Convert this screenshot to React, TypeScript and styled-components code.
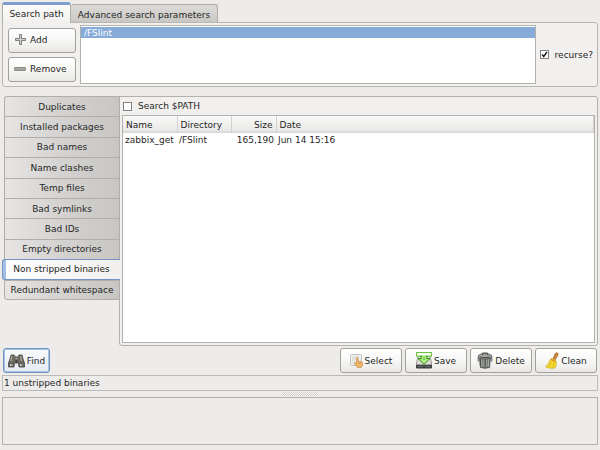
import React, { useState } from "react";
import styled, { createGlobalStyle, css } from "styled-components";

const GlobalStyle = createGlobalStyle`
  *, *::before, *::after { box-sizing: border-box; }
  body {
    margin: 0;
    background: #edeceb;
    color: #262626;
    font: 9px/14px "DejaVu Sans", Verdana, sans-serif;
  }
  button, input, textarea { font: inherit; color: inherit; margin: 0; }
  svg { display: block; flex: none; }
`;

const Window = styled.div`
  display: flex;
  flex-direction: column;
  min-height: 100vh;
  padding: 2px 2px 5px;
`;

const PathTabs = styled.div`
  display: flex;
  align-items: flex-end;
  height: 20px;
`;

const PathTab = styled.button<{ $active: boolean }>`
  position: relative;
  padding: 0 5px;
  border: 1px solid #b0aeab;
  border-bottom: 0;
  border-radius: 3px 3px 0 0;
  white-space: nowrap;
  ${({ $active }) =>
    $active
      ? css`
          width: 69px;
          height: 21px;
          margin-bottom: -1px;
          border-top: 3px solid #7d9fcd;
          background: linear-gradient(#fcfcfc, #f1f0ee);
          z-index: 1;
        `
      : css`
          width: 147px;
          height: 18px;
          border-left: 0;
          padding-top: 2px;
          background: linear-gradient(#dcdbd9, #c9c8c5);
        `}
`;

const PathPanel = styled.section`
  display: flex;
  gap: 4px;
  height: 65px;
  padding: 2px 4px 2px 5px;
  border: 1px solid #b9b7b4;
  border-radius: 0 3px 3px 3px;
  background: #f1f0ee;
`;

const PathActions = styled.div`
  display: flex;
  flex-direction: column;
  justify-content: center;
  gap: 4px;
  width: 68px;
`;

const Button = styled.button<{ $primary?: boolean; $align?: string }>`
  display: flex;
  align-items: center;
  justify-content: ${({ $align }) => $align ?? "center"};
  gap: 2px;
  height: 25px;
  padding: 0 5px;
  border: 1px solid ${({ $primary }) => ($primary ? "#6f93c2" : "#a3a19e")};
  border-radius: 3px;
  background: linear-gradient(#ffffff, #f7f7f6 50%, #e9e8e6);
  white-space: nowrap;
  ${({ $primary }) =>
    $primary &&
    css`
      background: linear-gradient(#f9fbfd, #e3eaf3);
      box-shadow: inset 0 0 0 1px #a9c1e0;
    `}
`;

const PathList = styled.ul`
  flex: 1;
  margin: 0;
  padding: 1px 0;
  border: 1px solid #b3b1ae;
  background: #fff;
  list-style: none;
`;

const PathItem = styled.li`
  height: 11px;
  padding: 0 3px;
  background: #86abd9;
  color: #fff;
  line-height: 12px;
`;

const CheckLabel = styled.label`
  display: flex;
  align-items: center;
  gap: 6px;
  white-space: nowrap;
`;

const CheckBox = styled.input`
  appearance: none;
  width: 9px;
  height: 9px;
  border: 1px solid #858381;
  background: #fff;
  &:checked {
    background: #fff
      url("data:image/svg+xml,%3Csvg xmlns='http://www.w3.org/2000/svg' viewBox='0 0 7 7'%3E%3Cpath d='M1 3.5 2.7 5.5 6 1' fill='none' stroke='%23222' stroke-width='1.5'/%3E%3C/svg%3E");
  }
`;

const Results = styled.main`
  display: flex;
  flex: 1;
  min-height: 240px;
  margin-top: 9px;
`;

const ModeTabs = styled.nav`
  position: relative;
  z-index: 1;
  display: grid;
  grid-auto-rows: 1fr;
  align-self: flex-start;
  flex: none;
  width: 118px;
  height: 204px;
  margin-right: -1px;
  padding-left: 2px;
`;

const ModeTab = styled.button<{ $active: boolean }>`
  padding: 0;
  border: 1px solid #b0aeab;
  border-bottom-width: 0;
  background: linear-gradient(90deg, #e6e5e3, #d5d4d2 45%, #c7c6c3);
  white-space: nowrap;
  &:first-child { border-top-left-radius: 3px; }
  &:last-child {
    border-bottom-width: 1px;
    border-bottom-left-radius: 3px;
  }
  ${({ $active }) =>
    $active &&
    css`
      margin-left: -2px;
      border-color: #7295c4;
      border-right: 0;
      border-bottom-width: 1px;
      border-radius: 3px 0 0 3px;
      background: linear-gradient(90deg, #a3bfe3 3px, #fdfdfd 3px, #f1f0ee);
    `}
`;

const ResultPanel = styled.section`
  display: flex;
  flex: 1;
  flex-direction: column;
  min-width: 0;
  padding: 2px;
  border: 1px solid #b3b1ae;
  border-radius: 0 3px 3px 3px;
  background: #f1f0ee;
`;

const PathOption = styled.div`
  height: 16px;
  padding: 0 1px;
`;

const TableFrame = styled.div`
  flex: 1;
  border: 1px solid #b3b1ae;
  background: #fff;
`;

const Table = styled.table`
  width: 100%;
  border-collapse: collapse;
  table-layout: fixed;
`;

const Column = styled.col<{ $width?: number }>`
  width: ${({ $width }) => ($width ? `${$width}px` : "auto")};
`;

const HeadRow = styled.tr`
  height: 17px;
  background: linear-gradient(#fafafa, #ebeae8 80%, #d8d6d4);
`;

const HeadCell = styled.th<{ $right?: boolean }>`
  padding: 1px 3px 0;
  border-right: 1px solid #d3d1cf;
  font-weight: normal;
  text-align: ${({ $right }) => ($right ? "right" : "left")};
`;

const Cell = styled.td<{ $right?: boolean }>`
  padding: 0 2px;
  text-align: ${({ $right }) => ($right ? "right" : "left")};
  white-space: nowrap;
`;

const Toolbar = styled.div`
  display: flex;
  gap: 3px;
  padding: 2px 1px;
`;

const FindSlot = styled.div`
  display: flex;
  flex: 1;
`;

const ToolButton = styled(Button)`
  width: 62px;
`;

const FindButton = styled(Button)`
  width: 47px;
  padding: 0 3px;
`;

const Status = styled.output`
  display: block;
  height: 16px;
  padding: 0 1px;
  border: 1px solid #bcbab8;
`;

const Grip = styled.div`
  align-self: center;
  width: 36px;
  height: 4px;
  margin: 1px 0;
  background: repeating-conic-gradient(#d2d0ce 0 25%, #f5f4f3 0 50%) 0 0 / 2px 2px;
`;

const Log = styled.textarea`
  display: block;
  width: 100%;
  height: 48px;
  padding: 2px;
  border: 1px solid #b3b1ae;
  background: #edeceb;
  resize: none;
  outline: 0;
`;

const PlusIcon = () => (
  <svg width="14" height="14" viewBox="0 0 14 14">
    <path d="M5.5 1.5h2v4h4v2h-4v4h-2v-4h-4v-2h4z" fill="#d0d0ce" stroke="#7d7d7b" />
  </svg>
);

const MinusIcon = () => (
  <svg width="14" height="14" viewBox="0 0 14 14">
    <rect x=".5" y="5.5" width="11" height="3" rx=".5" fill="#a5a5a3" stroke="#8d8d8b" />
  </svg>
);

const BinocularsIcon = () => (
  <svg width="17" height="16" viewBox="0 0 17 16">
    <path d="M3 2h3l1 2h3l1-2h3l1 4 1.5 4v4H11l-.5-4h-4L6 14H.5v-4L2 6z" fill="#6a6a61" stroke="#45453f" strokeWidth=".8" />
    <path d="M4 3 3 8M12.5 3l1 5M7.5 5.5h2" stroke="#aaa99c" strokeWidth="1.3" />
    <path d="M1.5 10.5h4v3h-4zM11.5 10.5h4v3h-4z" fill="#96958a" stroke="#4b4b45" strokeWidth=".6" />
    <path d="M2.5 11v2M12.5 11v2" stroke="#d5d4c8" />
    <path d="M7.5 7.5h2v2h-2z" fill="#35352f" />
  </svg>
);

const SelectIcon = () => (
  <svg width="13" height="14" viewBox="0 0 13 14">
    <rect x=".5" y=".5" width="11" height="11" rx="1" fill="#f1f1ee" stroke="#c2c2be" />
    <path d="M2 3h7M2 5h4M2 7h3M2 9h3" stroke="#d3d3cf" />
    <path d="M6.5 9V4.5q0-.9.8-.9t.8.9V7l3.5.8q.9.3.9 1.2v2.5L11 13.5H7.5L4.5 10q-.3-1 .6-1.1z" fill="#efb56a" stroke="#c08c4e" strokeWidth=".7" />
    <path d="M8.2 8v2M10 8.3v1.8" stroke="#cf924c" strokeWidth=".6" />
  </svg>
);

const SaveIcon = () => (
  <svg width="16" height="17" viewBox="0 0 16 17">
    <path d="M2 4h12l1.5 7v5H.5v-5z" fill="#deded9" stroke="#888a85" strokeWidth=".8" />
    <path d="M.5 13h15v3H.5z" fill="#444745" stroke="#343633" strokeWidth=".7" />
    <path d="M2 14.5h5M10 14.5h4" stroke="#80827d" strokeDasharray="1 .6" />
    <rect x=".6" y=".6" width="14.8" height="3.5" fill="#fff" stroke="#61bc2b" />
    <path d="M5 4.2h6v2.3h3L8 12.3 2 6.5h3z" fill="#8bdc59" stroke="#3f971d" />
    <path d="M6.2 3h3.6v4.3H12L8 11 4.5 7.4h1.7z" fill="#b7ef8c" />
    <path d="M8 5v3" stroke="#48a51f" />
  </svg>
);

const TrashIcon = () => (
  <svg width="16" height="17" viewBox="0 0 16 17">
    <path d="M2.5 5h11l-1 10.5q-4.5 1.5-9 0z" fill="#777974" stroke="#40423f" strokeWidth=".8" />
    <path d="m4.5 7 .5 8M7 7v8M9.3 7v8M11.8 7l-.5 8" stroke="#b5b7b2" strokeWidth=".8" />
    <path d="M3.3 7v7M8.2 7v8" stroke="#3a3c39" strokeWidth=".8" />
    <path d="M1 5q0-3.3 7-3.3T15 5q-1 2-7 2T1 5z" fill="#a5a7a2" stroke="#444643" strokeWidth=".8" />
    <path d="M5.5 3V1h5v2M3 5q5 1.3 10 0" fill="none" stroke="#4a4c49" />
    <path d="M1.2 5.5v4M14.8 5.5v4" stroke="#555753" />
  </svg>
);

const BroomIcon = () => (
  <svg width="14" height="17" viewBox="0 0 14 17">
    <path d="m8 7 2.3-5.5q1-1.3 2.2-.4.9.7.4 2L10 8z" fill="#cd853c" stroke="#9d6228" strokeWidth=".7" />
    <path d="M6.5 6.5 11 8.5q1.2 4-1 7.5Q4.5 17 .7 14.8 4 12 5 8z" fill="#f6da32" stroke="#cdac14" strokeWidth=".7" />
    <path d="m7 9.5-3.2 5M9.4 10l-1.6 5" stroke="#c9a810" strokeWidth=".6" />
    <path d="m5.8 7.4 4.8 2.2" stroke="#d9682a" strokeWidth=".9" />
  </svg>
);

const pathTabs = ["Search path", "Advanced search parameters"];

const modes = [
  "Duplicates",
  "Installed packages",
  "Bad names",
  "Name clashes",
  "Temp files",
  "Bad symlinks",
  "Bad IDs",
  "Empty directories",
  "Non stripped binaries",
  "Redundant whitespace",
];

const tools = [
  { label: "Select", Icon: SelectIcon },
  { label: "Save", Icon: SaveIcon },
  { label: "Delete", Icon: TrashIcon },
  { label: "Clean", Icon: BroomIcon },
];

const files = [
  { name: "zabbix_get", directory: "/FSlint", size: "165,190", date: "Jun 14 15:16" },
];

export default function App() {
  const [pathTab, setPathTab] = useState(pathTabs[0]);
  const [mode, setMode] = useState("Non stripped binaries");

  return (
    <>
      <GlobalStyle />
      <Window>
        <PathTabs role="tablist">
          {pathTabs.map((tab) => (
            <PathTab
              key={tab}
              role="tab"
              aria-selected={tab === pathTab}
              $active={tab === pathTab}
              onClick={() => setPathTab(tab)}
            >
              {tab}
            </PathTab>
          ))}
        </PathTabs>
        <PathPanel>
          <PathActions>
            <Button $align="flex-start"><PlusIcon />Add</Button>
            <Button $align="flex-start"><MinusIcon />Remove</Button>
          </PathActions>
          <PathList>
            <PathItem>/FSlint</PathItem>
          </PathList>
          <CheckLabel>
            <CheckBox type="checkbox" defaultChecked />
            recurse?
          </CheckLabel>
        </PathPanel>

        <Results>
          <ModeTabs>
            {modes.map((item) => (
              <ModeTab key={item} $active={item === mode} onClick={() => setMode(item)}>
                {item}
              </ModeTab>
            ))}
          </ModeTabs>
          <ResultPanel>
            <PathOption>
              <CheckLabel>
                <CheckBox type="checkbox" />
                Search $PATH
              </CheckLabel>
            </PathOption>
            <TableFrame>
              <Table>
                <colgroup>
                  <Column $width={54} />
                  <Column $width={54} />
                  <Column $width={45} />
                  <Column />
                </colgroup>
                <thead>
                  <HeadRow>
                    <HeadCell>Name</HeadCell>
                    <HeadCell>Directory</HeadCell>
                    <HeadCell $right>Size</HeadCell>
                    <HeadCell>Date</HeadCell>
                  </HeadRow>
                </thead>
                <tbody>
                  {files.map((file) => (
                    <tr key={file.name}>
                      <Cell>{file.name}</Cell>
                      <Cell>{file.directory}</Cell>
                      <Cell $right>{file.size}</Cell>
                      <Cell>{file.date}</Cell>
                    </tr>
                  ))}
                </tbody>
              </Table>
            </TableFrame>
          </ResultPanel>
        </Results>

        <Toolbar>
          <FindSlot>
            <FindButton $primary><BinocularsIcon />Find</FindButton>
          </FindSlot>
          {tools.map(({ label, Icon }) => (
            <ToolButton key={label}><Icon />{label}</ToolButton>
          ))}
        </Toolbar>
        <Status>1 unstripped binaries</Status>
        <Grip />
        <Log aria-label="Messages" readOnly />
      </Window>
    </>
  );
}
